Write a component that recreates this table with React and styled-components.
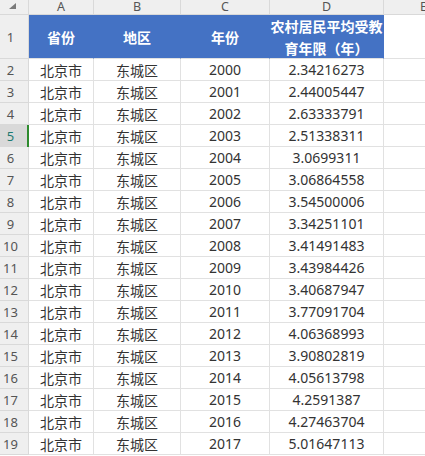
import styled, { createGlobalStyle } from "styled-components";

const GlobalStyle = createGlobalStyle`
  html, body {
    margin: 0;
    padding: 0;
    background: #ffffff;
    overflow: hidden;
  }
`;

const rows = [
  ["2000", "2.34216273"],
  ["2001", "2.44005447"],
  ["2002", "2.63333791"],
  ["2003", "2.51338311"],
  ["2004", "3.0699311"],
  ["2005", "3.06864558"],
  ["2006", "3.54500006"],
  ["2007", "3.34251101"],
  ["2008", "3.41491483"],
  ["2009", "3.43984426"],
  ["2010", "3.40687947"],
  ["2011", "3.77091704"],
  ["2012", "4.06368993"],
  ["2013", "3.90802819"],
  ["2014", "4.05613798"],
  ["2015", "4.2591387"],
  ["2016", "4.27463704"],
  ["2017", "5.01647113"],
];

const Sheet = styled.div`
  display: grid;
  grid-template-columns: 29px 65px 87px 89px 114px 76px;
  grid-template-rows: 15px 44px repeat(18, 22px);
  width: 425px;
  height: 456px;
  overflow: hidden;
  font-family: "Noto Sans", "Noto Sans CJK SC", sans-serif;
  font-size: 14px;
  color: #333333;
`;

const Cell = styled.div`
  box-sizing: border-box;
  display: flex;
  align-items: center;
  justify-content: center;
  border-right: 1px solid #e1e1e1;
  border-bottom: 1px solid #e1e1e1;
  white-space: nowrap;
  overflow: hidden;
`;

const Corner = styled(Cell)`
  background: #efefef;
  border-color: #d9d9d9;
  align-items: flex-start;
  justify-content: flex-start;
  padding: 3px 0 0 9px;
`;

const ColHead = styled(Cell)`
  background: #efefef;
  border-color: #d9d9d9;
  color: #555555;
  font-size: 12.5px;
  font-family: "Noto Sans", sans-serif;
  line-height: 12px;
  justify-content: ${(p) => (p.$edge ? "flex-end" : "center")};
  padding-right: ${(p) => (p.$edge ? "32px" : "0")};
`;

const RowHead = styled(Cell)`
  position: relative;
  overflow: visible;
  background: ${(p) => (p.$active ? "#d9d9d9" : "#efefef")};
  border-color: #d9d9d9;
  color: ${(p) => (p.$active ? "#1e7a72" : "#555555")};
  font-size: 13px;
  font-family: "Noto Sans", sans-serif;
  padding-right: 7px;

  &::after {
    content: "";
    display: ${(p) => (p.$active ? "block" : "none")};
    position: absolute;
    right: -1px;
    top: 0;
    bottom: -1px;
    width: 2px;
    background: #2e8b2e;
  }
`;

const HeadCell = styled(Cell)`
  background: #4472c4;
  border-right-color: #4472c4;
  color: #ffffff;
  font-weight: bold;
  font-family: "Noto Sans CJK SC", sans-serif;
  white-space: normal;
  text-align: center;
  line-height: 22px;
`;

const EmptyCell = styled(Cell)``;

const RowContent = ({ n, year, value }) => (
  <>
    <RowHead $active={n === 5}>{n}</RowHead>
    <Cell>北京市</Cell>
    <Cell>东城区</Cell>
    <Cell>{year}</Cell>
    <Cell>{value}</Cell>
    <EmptyCell />
  </>
);

const App = () => (
  <>
    <GlobalStyle />
    <Sheet>
      <Corner>
        <svg width="7" height="6" viewBox="0 0 7 6">
          <polygon points="7,0 7,6 0,6" fill="#7a7a7a" />
        </svg>
      </Corner>
      <ColHead>A</ColHead>
      <ColHead>B</ColHead>
      <ColHead>C</ColHead>
      <ColHead>D</ColHead>
      <ColHead $edge>E</ColHead>

      <RowHead>1</RowHead>
      <HeadCell>省份</HeadCell>
      <HeadCell>地区</HeadCell>
      <HeadCell>年份</HeadCell>
      <HeadCell>
        农村居民平均受教
        <br />
        育年限（年）
      </HeadCell>
      <EmptyCell />

      {rows.map(([year, value], i) => (
        <RowContent key={year} n={i + 2} year={year} value={value} />
      ))}
    </Sheet>
  </>
);

export default App;
